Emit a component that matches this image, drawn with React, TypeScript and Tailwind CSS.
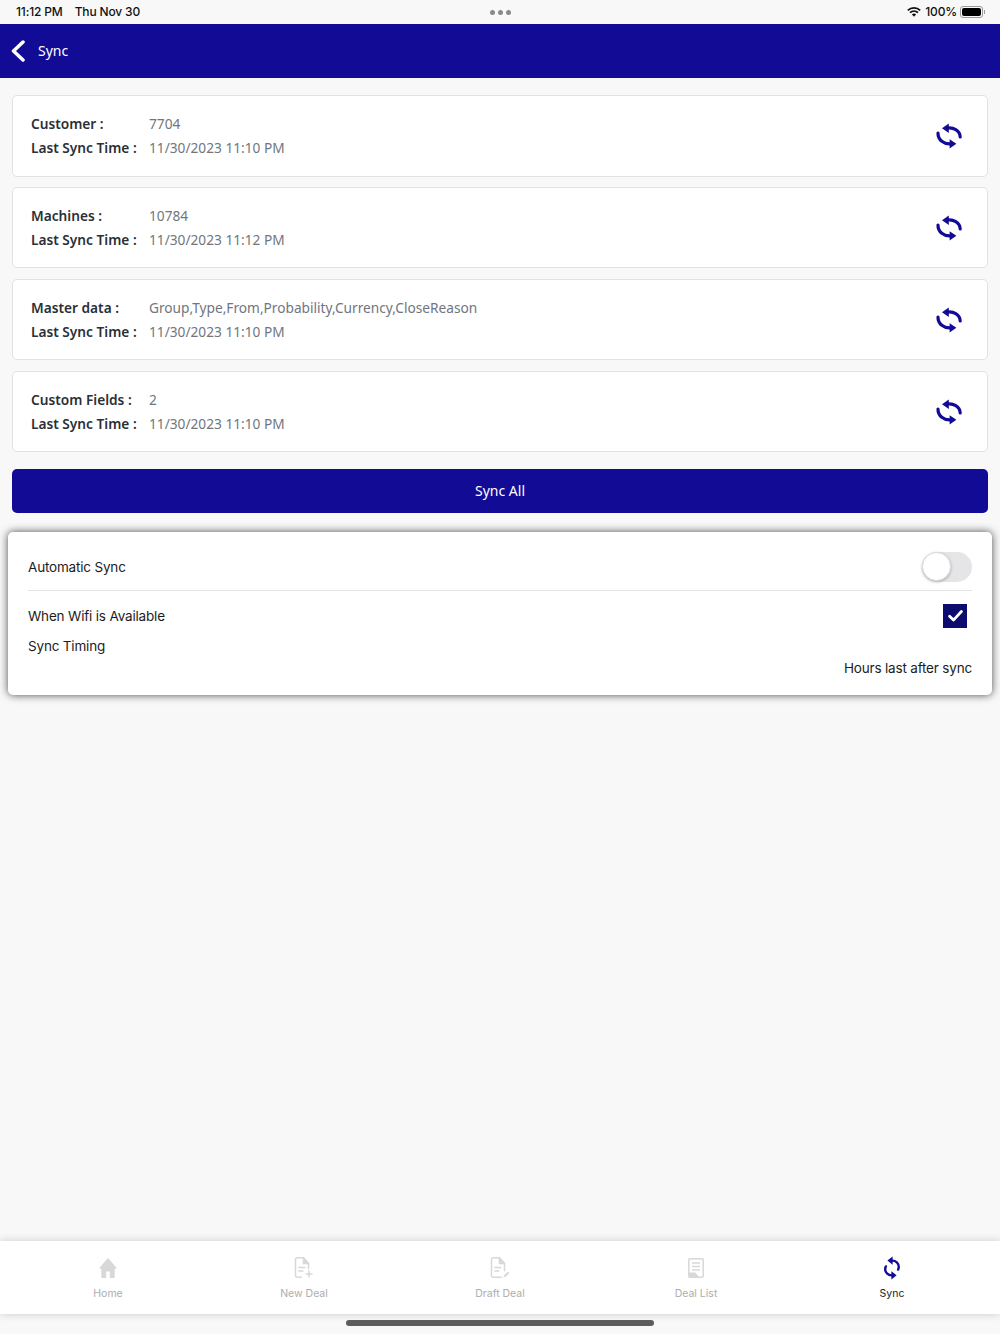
import React from 'react';

const SyncIcon = ({ className }: { className?: string }) => (
  <svg className={className} viewBox="0 0 26 26" fill="none">
    <path d="M11 5.200C17 4 24 7.500 24.200 14" stroke="currentColor" strokeWidth="3.200" strokeLinecap="round" />
    <path d="M12.800 .6v9.400L6 5.200z" fill="currentColor" />
    <path d="M2 10C1.800 17 8 21.500 15 20.800" stroke="currentColor" strokeWidth="3.200" strokeLinecap="round" />
    <path d="M13.600 16.200v9.400l6.800-4.800z" fill="currentColor" />
  </svg>
);

const TabSyncIcon = () => (
  <svg className="w-[18px] h-[24px] text-[#120b96]" viewBox="0 0 18 24" fill="none">
    <path d="M9 4.600c3.600-.2 7 2.600 6.800 6.600-.1 1-.3 1.700-.7 2.400" stroke="currentColor" strokeWidth="2.400" strokeLinecap="round" />
    <path d="M9.600 .4v8.400L4.400 4.400z" fill="currentColor" />
    <path d="M9 19.400c-3.600.2-7-2.600-6.800-6.600.1-1 .3-1.700.7-2.400" stroke="currentColor" strokeWidth="2.400" strokeLinecap="round" />
    <path d="M8.400 15.200v8.400l5.200-4.400z" fill="currentColor" />
  </svg>
);

const HomeIcon = () => (
  <svg className="w-[20px] h-[22px] text-[#d8d8d8]" viewBox="0 0 20 22" fill="currentColor">
    <path d="M10 1 .8 11.600h2.500V21h4.900v-6.400h3.600V21h4.900v-9.400h2.500z" />
  </svg>
);

const NewDealIcon = () => (
  <svg className="w-[20px] h-[22px] text-[#d8d8d8]" viewBox="0 0 20 22" fill="none" stroke="currentColor" strokeWidth="1.500">
    <path d="M8 20.200H3.200a1.700 1.700 0 0 1-1.700-1.700V2.500A1.700 1.700 0 0 1 3.200.8h6.300l5 5.400v6" />
    <path d="M9.500 1v5.400h5" fill="currentColor" />
    <path d="M4.300 10.500h7M4.300 14h5M15 13.500v7M11.500 17h7" />
  </svg>
);

const DraftDealIcon = () => (
  <svg className="w-[20px] h-[22px] text-[#d8d8d8]" viewBox="0 0 20 22" fill="none" stroke="currentColor" strokeWidth="1.500">
    <path d="M12 20.200H3.200a1.700 1.700 0 0 1-1.700-1.700V2.500A1.700 1.700 0 0 1 3.200.8h6.300l5 5.400v8" />
    <path d="M9.500 1v5.400h5" fill="currentColor" />
    <path d="M4.300 10.500h7M4.300 14h5" />
    <path d="m13.500 20.500.6-2.300 3.700-3.500 1.500 1.500-3.600 3.600z" fill="currentColor" stroke="none" />
  </svg>
);

const DealListIcon = () => (
  <svg className="w-[16px] h-[20px] text-[#d8d8d8]" viewBox="0 0 16 20" fill="none" stroke="currentColor" strokeWidth="1.500">
    <path d="M1.800.8h12.400a1 1 0 0 1 1 1v16.400a1 1 0 0 1-1 1H1.800a1 1 0 0 1-1-1V1.800a1 1 0 0 1 1-1z" />
    <path d="M4 5h8M4 8.500h8M4 12h8" />
    <path d="M1 14.500h6l4.500 4.700H1z" fill="currentColor" stroke="none" />
  </svg>
);

const rows = [
  { label: 'Customer :', value: '7704', time: '11/30/2023 11:10 PM', box: 'h-[82px]' },
  { label: 'Machines :', value: '10784', time: '11/30/2023 11:12 PM', box: 'h-[81px]' },
  { label: 'Master data :', value: 'Group,Type,From,Probability,Currency,CloseReason', time: '11/30/2023 11:10 PM', box: 'h-[81px] mt-[1px]' },
  { label: 'Custom Fields :', value: '2', time: '11/30/2023 11:10 PM', box: 'h-[81px] mt-[1px]' },
];

const tabs = [
  { label: 'Home', icon: <HomeIcon /> },
  { label: 'New Deal', icon: <NewDealIcon /> },
  { label: 'Draft Deal', icon: <DraftDealIcon /> },
  { label: 'Deal List', icon: <DealListIcon /> },
  { label: 'Sync', icon: <TabSyncIcon />, active: true },
];

const SyncCard = ({ label, value, time, box }: { label: string; value: string; time: string; box: string }) => (
  <div className={`${box} bg-white border border-[#e2e2e2] rounded-[5px] pl-[18px] pr-[25px] flex items-center justify-between`}>
    <div className="flex flex-col gap-[2px] text-[13.7px] leading-[22px] font-['Noto_Sans',sans-serif]">
      <div className="flex">
        <span className="w-[118px] font-semibold text-[#2b2f36]">{label}</span>
        <span className="text-[#6f7680]">{value}</span>
      </div>
      <div className="flex">
        <span className="w-[118px] font-semibold text-[#2b2f36]">Last Sync Time :</span>
        <span className="text-[#6f7680]">{time}</span>
      </div>
    </div>
    <SyncIcon className="w-[26px] h-[26px] text-[#120b96]" />
  </div>
);

export default function App() {
  return (
    <div className="w-[1000px] h-[1334px] bg-[#f8f8f8] flex flex-col font-['Inter',sans-serif] overflow-hidden">
      {/* status bar */}
      <div className="h-[24px] pl-[16px] pr-[15px] relative flex items-center justify-between text-[12px] tracking-[-0.15px] text-[#111]">
        <div className="flex gap-[12px] font-medium">
          <span>11:12 PM</span>
          <span>Thu Nov 30</span>
        </div>
        <div className="absolute left-[490px] top-[10px] flex gap-[3px]">
          <span className="w-[5px] h-[5px] rounded-full bg-[#8a8a8a]"></span>
          <span className="w-[5px] h-[5px] rounded-full bg-[#8a8a8a]"></span>
          <span className="w-[5px] h-[5px] rounded-full bg-[#8a8a8a]"></span>
        </div>
        <div className="flex items-center">
          <svg className="w-[14px] h-[10px]" viewBox="0 0 14 10" fill="none" stroke="#111" strokeWidth="1.700">
            <path d="M.8 3.400a9 9 0 0 1 12.400 0M3 5.600a6 6 0 0 1 8 0" />
            <path d="M7 9.800 4.900 7.600a3 3 0 0 1 4.200 0z" fill="#111" stroke="none" />
          </svg>
          <span className="ml-[4px] mr-[3px] font-medium">100%</span>
          <div className="flex items-center">
            <div className="w-[23px] h-[12px] border border-[#9a9a9a] rounded-[3px] p-[1px]">
              <div className="w-full h-full bg-black rounded-[2px]"></div>
            </div>
            <div className="w-[1px] h-[4px] bg-[#9a9a9a] ml-[1px]"></div>
          </div>
        </div>
      </div>

      {/* header */}
      <div className="h-[54px] bg-[#120b96] flex items-center pl-[11px] text-white">
        <svg className="w-[14px] h-[22px]" viewBox="0 0 14 22" fill="none" stroke="white" strokeWidth="3.500" strokeLinecap="round" strokeLinejoin="round">
          <path d="M12 2 2.500 11l9.500 9" />
        </svg>
        <span className="ml-[13px] pb-[2px] text-[14px] font-['Noto_Sans',sans-serif]">Sync</span>
      </div>

      {/* cards */}
      <div className="pt-[17px] px-[12px] flex flex-col gap-[10px]">
        {rows.map(r => (
          <SyncCard key={r.label} {...r} />
        ))}
      </div>

      <div className="px-[12px] pt-[17px]">
        <button className="w-full h-[44px] pb-[2px] bg-[#120b96] rounded-[5px] text-white text-[14px] font-['Noto_Sans',sans-serif]">Sync All</button>
      </div>

      {/* settings panel */}
      <div className="mx-[8px] mt-[19px] h-[163px] bg-white rounded-[5px] shadow-[0_0_9px_rgba(0,0,0,0.7)] px-[20px] text-[13.5px] tracking-[-0.18px] text-[#1c1c1e]">
        <div className="h-[59px] pt-[12px] border-b border-[#e4e4e4] flex items-center justify-between">
          <span>Automatic Sync</span>
          <div className="w-[50px] h-[30px] bg-[#e5e5e7] rounded-full">
            <div className="w-[29px] h-[29px] bg-white rounded-full border border-[#dcdcdc] shadow-[0_1px_3px_rgba(0,0,0,0.25)]"></div>
          </div>
        </div>
        <div className="pt-[13px] flex items-center justify-between">
          <span>When Wifi is Available</span>
          <div className="w-[24px] h-[24px] mr-[5px] bg-[#0d0b6e] flex items-center justify-center">
            <svg className="w-[15px] h-[12px]" viewBox="0 0 14 11" fill="none" stroke="white" strokeWidth="2.600" strokeLinecap="round" strokeLinejoin="round">
              <path d="m1.500 5.800 3.600 3.500 7.400-8" />
            </svg>
          </div>
        </div>
        <div className="leading-[20px] mt-[8px]">Sync Timing</div>
        <div className="leading-[20px] mt-[2px] text-right">Hours last after sync</div>
      </div>

      {/* tab bar */}
      <div className="mt-auto mb-[20px] h-[73px] bg-white shadow-[0_0_8px_rgba(0,0,0,0.18)] grid grid-cols-5 px-[10px]">
        {tabs.map(t => (
          <div key={t.label} className="flex flex-col items-center pt-[14px]">
            <div className="h-[25px] flex items-center justify-center">{t.icon}</div>
            <span className={`mt-[7px] text-[10.5px] leading-[14px] ${t.active ? 'text-[#222]' : 'text-[#adadad]'}`}>{t.label}</span>
          </div>
        ))}
      </div>
      <div className="absolute left-[346px] top-[1320px] w-[308px] h-[6px] rounded-full bg-[#5c5c5c]"></div>
    </div>
  );
}
